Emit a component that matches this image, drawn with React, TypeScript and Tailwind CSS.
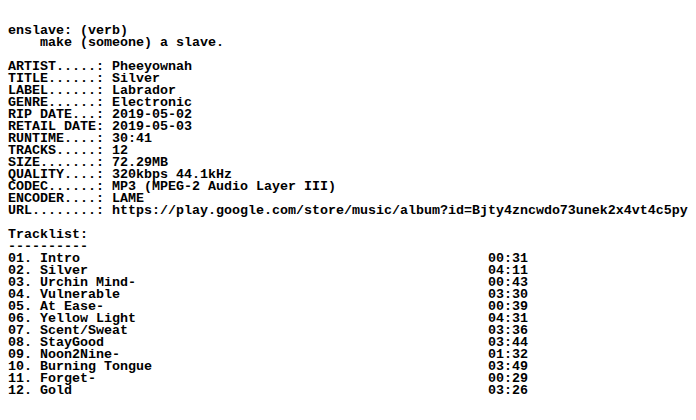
const info: [string, string][] = [
  ["ARTIST.....", "Pheeyownah"],
  ["TITLE......", "Silver"],
  ["LABEL......", "Labrador"],
  ["GENRE......", "Electronic"],
  ["RIP DATE...", "2019-05-02"],
  ["RETAIL DATE", "2019-05-03"],
  ["RUNTIME....", "30:41"],
  ["TRACKS.....", "12"],
  ["SIZE.......", "72.29MB"],
  ["QUALITY....", "320kbps 44.1kHz"],
  ["CODEC......", "MP3 (MPEG-2 Audio Layer III)"],
  ["ENCODER....", "LAME"],
  ["URL........", "https://play.google.com/store/music/album?id=Bjty4zncwdo73unek2x4vt4c5py"],
];

const tracks: [string, string][] = [
  ["Intro", "00:31"],
  ["Silver", "04:11"],
  ["Urchin Mind-", "00:43"],
  ["Vulnerable", "03:30"],
  ["At Ease-", "00:39"],
  ["Yellow Light", "04:31"],
  ["Scent/Sweat", "03:36"],
  ["StayGood", "03:44"],
  ["Noon2Nine-", "01:32"],
  ["Burning Tongue", "03:49"],
  ["Forget-", "00:29"],
  ["Gold", "03:26"],
];

export default function App() {
  const lines: string[] = [
    "enslave: (verb)",
    "    make (someone) a slave.",
    "",
    ...info.map(([k, v]) => `${k}: ${v}`),
    "",
    "Tracklist:",
    "----------",
    ...tracks.map(([name, time], i) => {
      const left = `${String(i + 1).padStart(2, "0")}. ${name}`;
      return left.padEnd(60, " ") + time;
    }),
  ];

  return (
    <div className="w-[696px] h-[420px] overflow-hidden bg-white pt-[25px] pl-2">
      <pre className="m-0 whitespace-pre font-['Liberation_Mono',monospace] font-bold text-[13.333px] leading-[12px] text-black">
        {lines.join("\n")}
      </pre>
    </div>
  );
}
